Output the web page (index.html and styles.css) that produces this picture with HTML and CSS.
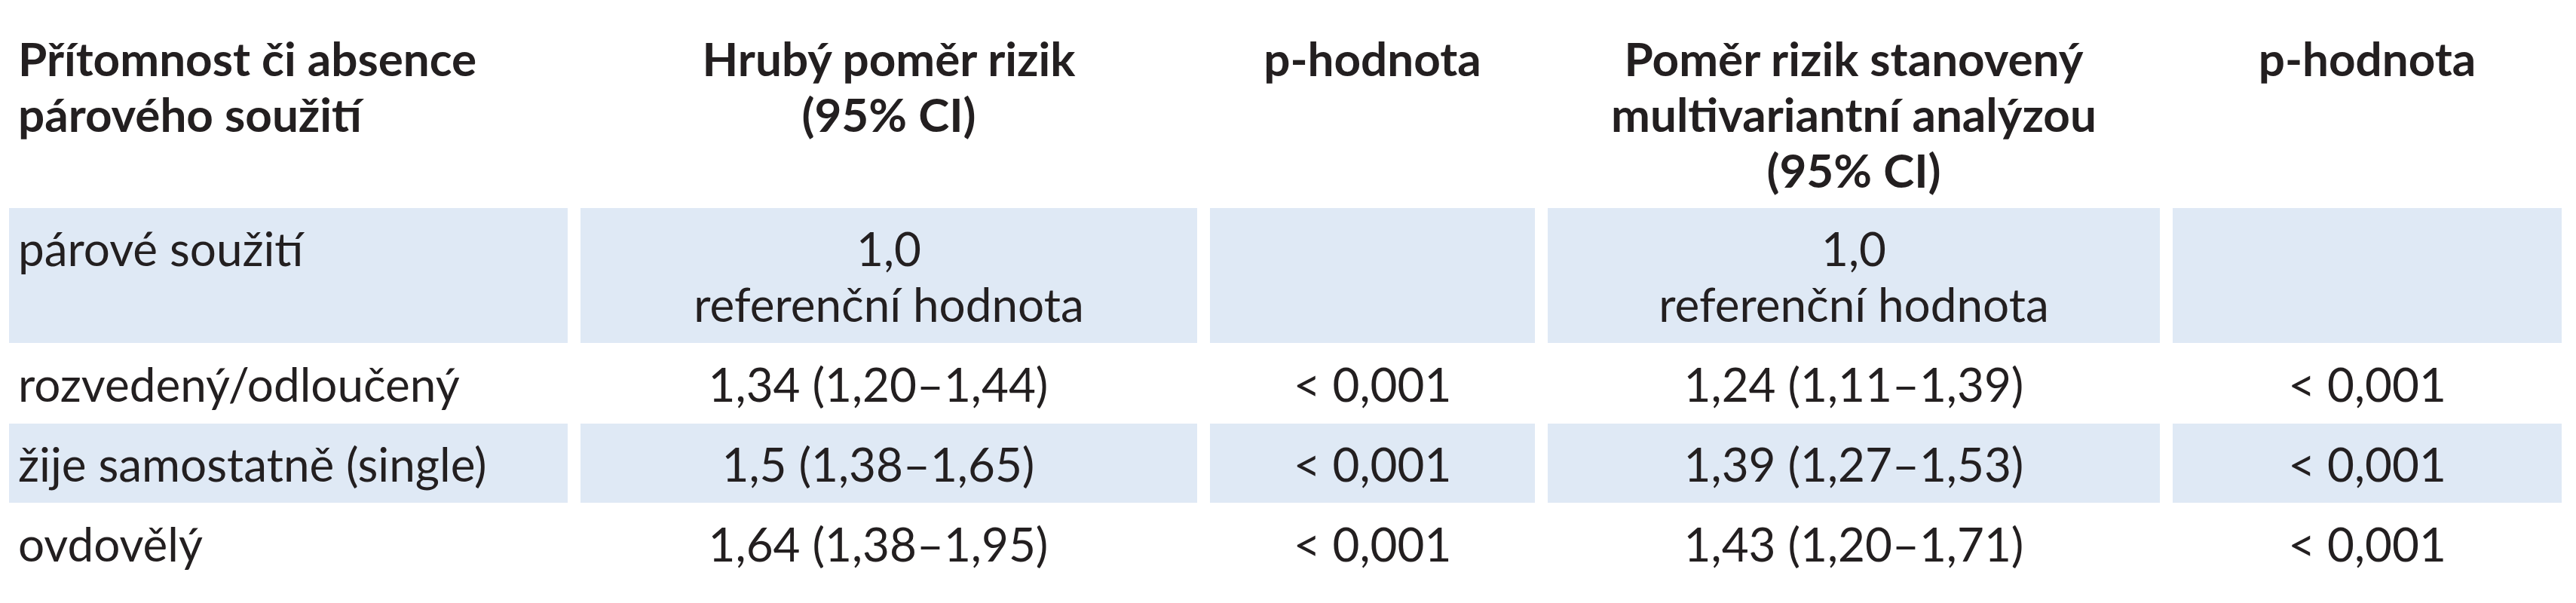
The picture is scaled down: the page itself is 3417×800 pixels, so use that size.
FILE: index.html
```html
<!DOCTYPE html>
<html lang="cs">
<head>
<meta charset="utf-8">
<title>Přítomnost či absence párového soužití</title>
<link rel="stylesheet" href="styles.css">
</head>
<body>
<div class="table">
  <div class="cell head left">Přítomnost či absence<br>párového soužití</div>
  <div class="cell head">Hrubý poměr rizik<br>(95% CI)</div>
  <div class="cell head">p-hodnota</div>
  <div class="cell head">Poměr rizik stanovený<br>multivariantní analýzou<br>(95% CI)</div>
  <div class="cell head">p-hodnota</div>

  <div class="cell shade left">párové soužití</div>
  <div class="cell shade">1,0<br>referenční hodnota</div>
  <div class="cell shade"></div>
  <div class="cell shade">1,0<br>referenční hodnota</div>
  <div class="cell shade"></div>

  <div class="cell left">rozvedený/odloučený</div>
  <div class="cell crude">1,34 (1,20–1,44)</div>
  <div class="cell">&lt; 0,001</div>
  <div class="cell">1,24 (1,11–1,39)</div>
  <div class="cell">&lt; 0,001</div>

  <div class="cell shade left">žije samostatně (single)</div>
  <div class="cell shade crude">1,5 (1,38–1,65)</div>
  <div class="cell shade">&lt; 0,001</div>
  <div class="cell shade">1,39 (1,27–1,53)</div>
  <div class="cell shade">&lt; 0,001</div>

  <div class="cell left">ovdovělý</div>
  <div class="cell crude">1,64 (1,38–1,95)</div>
  <div class="cell">&lt; 0,001</div>
  <div class="cell">1,43 (1,20–1,71)</div>
  <div class="cell">&lt; 0,001</div>
</div>
</body>
</html>
```
FILE: styles.css
```css
html, body {
  margin: 0;
  padding: 0;
  background: #ffffff;
}
body {
  font-family: "Lato", "Open Sans", sans-serif;
  color: #231f20;
  font-size: 62px;
  line-height: 74px;
}
.table {
  display: grid;
  grid-template-columns: 741px 818px 431px 812px 516px;
  column-gap: 17px;
  row-gap: 1px;
  padding-left: 12px;
}
.cell {
  padding: 16px 12px 15px 12px;
  text-align: center;
}
.cell.left {
  text-align: left;
}
.cell.crude {
  padding-right: 40px;
}
.cell.head {
  font-weight: 700;
  padding-top: 40px;
  padding-bottom: 13px;
}
.cell.shade {
  background: #dfe9f5;
}
```
